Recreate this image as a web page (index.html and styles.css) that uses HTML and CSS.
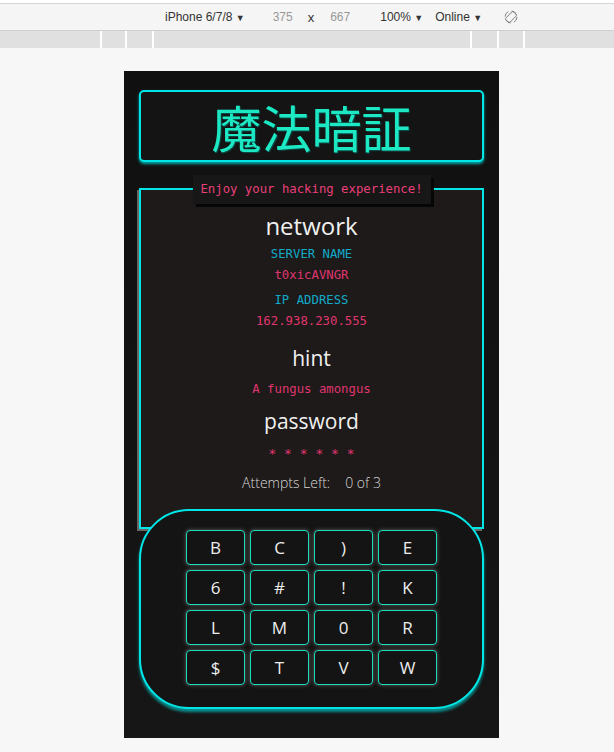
FILE: index.html
```html
<!DOCTYPE html>
<html>
<head>
  <title>魔法暗証</title>
  <link rel="stylesheet" href="styles.css">
</head>
<body>

<div class="devtools">
  <div class="toolbar">
    <span class="device">iPhone 6/7/8 <span class="arrow">&#9660;</span></span>
    <span class="dim">375</span>
    <span class="times">x</span>
    <span class="dim second">667</span>
    <span class="zoom">100% <span class="arrow">&#9660;</span></span>
    <span class="net">Online <span class="arrow">&#9660;</span></span>
    <svg class="rotate" width="14" height="14" viewBox="0 0 14 14">
      <circle cx="7" cy="7" r="6" fill="none" stroke="#777" stroke-width="0.9" stroke-dasharray="6 3.4"/>
      <rect x="4" y="1.5" width="6" height="11" rx="1.4" fill="none" stroke="#777" stroke-width="0.9" transform="rotate(45 7 7)"/>
    </svg>
  </div>
  <div class="ruler">
    <span style="width:100px"></span>
    <span style="width:23px"></span>
    <span style="width:25px"></span>
    <span style="width:316px"></span>
    <span style="width:25px"></span>
    <span style="width:24px"></span>
    <span style="width:89px"></span>
  </div>
</div>

<div class="stage">
  <div class="phone">
    <div class="title-box">
      <h1>魔法暗証</h1>
    </div>

    <div class="panel">
      <div class="tip">Enjoy your hacking experience!</div>

      <h2>network</h2>
      <p class="label">SERVER NAME</p>
      <p class="value">t0xicAVNGR</p>
      <p class="label next">IP ADDRESS</p>
      <p class="value">162.938.230.555</p>

      <h3 class="gap">hint</h3>
      <p class="value hint">A fungus amongus</p>

      <h3 class="pass">password</h3>
      <p class="value stars">* * * * * *</p>

      <p class="attempts">Attempts Left:<span class="count">0 of 3</span></p>
    </div>

    <div class="keypad">
      <div class="keys">
        <button>B</button>
        <button>C</button>
        <button>)</button>
        <button>E</button>
        <button>6</button>
        <button>#</button>
        <button>!</button>
        <button>K</button>
        <button>L</button>
        <button>M</button>
        <button>0</button>
        <button>R</button>
        <button>$</button>
        <button>T</button>
        <button>V</button>
        <button>W</button>
      </div>
    </div>
  </div>
</div>

</body>
</html>
```

FILE: styles.css
```css
body {
  margin: 0;
  background-color: #f7f7f7;
  font-family: "Open Sans", sans-serif;
}
.devtools {
  background-color: #fff;
  padding-top: 3px;
  font-family: "Liberation Sans", Arial, sans-serif;
  font-size: 12px;
  color: #333;
}
.toolbar {
  display: flex;
  align-items: center;
  height: 26px;
  padding-left: 165px;
  background-color: #f5f5f5;
  border-top: 1px solid #d6d6d6;
  border-bottom: 1px solid #cfcfcf;
}
.toolbar .arrow {
  font-size: 9px;
}
.toolbar .dim {
  color: #999;
  margin-left: 28px;
}
.toolbar .dim.second {
  margin-left: 16px;
}
.toolbar .times {
  margin-left: 15px;
  font-size: 13px;
}
.toolbar .zoom {
  margin-left: 30px;
}
.toolbar .net {
  margin-left: 12px;
}
.toolbar .rotate {
  margin-left: 22px;
}
.ruler {
  display: flex;
  gap: 2px;
  height: 17px;
  background-color: #fff;
}
.ruler span {
  background-color: #e0e0e0;
}

.stage {
  padding: 23px 0 0 124px;
}
.phone {
  width: 375px;
  height: 667px;
  box-sizing: border-box;
  padding: 19px 15px 0;
  background: linear-gradient(#101010, #161616);
}
.title-box {
  height: 72px;
  box-sizing: border-box;
  border: 2px solid #00e6e6;
  border-radius: 5px;
  background-color: #141414;
  box-shadow: 0 2px 3px rgba(0, 230, 230, 0.7);
  text-align: center;
}
.title-box h1 {
  margin: 0;
  font-family: "Noto Sans CJK JP", sans-serif;
  font-size: 50px;
  font-weight: 400;
  line-height: 68px;
  color: #1de8c4;
  text-shadow: 1px 1px 1px #0a4f4a;
}

.panel {
  position: relative;
  margin-top: 26px;
  padding: 20px 0 34px;
  border: 2px solid #00e6e6;
  background-color: #1d1a19;
  box-shadow: -2px 2px 0 #666;
  text-align: center;
}
.tip {
  position: absolute;
  top: -15px;
  left: 50%;
  transform: translateX(-50%);
  padding: 0 8px;
  line-height: 29px;
  white-space: nowrap;
  background-color: #171717;
  box-shadow: 3px 3px 0 #060606;
  font-family: "DejaVu Sans Mono", monospace;
  font-size: 12.3px;
  color: #ea3f79;
}
.panel h2, .panel h3 {
  margin: 0;
  font-size: 24px;
  font-weight: 400;
  line-height: 32px;
  color: #f0f0f0;
}
.panel h3 {
  font-size: 21px;
}
.panel h3.gap {
  margin-top: 13px;
}
.panel h3.pass {
  margin-top: 8px;
}
.label, .value {
  margin: 0;
  font-family: "DejaVu Sans Mono", monospace;
  font-size: 12.3px;
  line-height: 16px;
}
.label {
  margin-top: 4px;
  color: #12aac8;
}
.label.next {
  margin-top: 9px;
}
.value {
  margin-top: 5px;
  color: #e0356f;
}
.value.hint {
  margin-top: 7px;
}
.value.stars {
  margin-top: 9px;
  font-size: 13px;
}
.attempts {
  margin: 11px 0 0;
  font-size: 14px;
  font-weight: 300;
  line-height: 20px;
  color: #d8d8d8;
}
.attempts .count {
  margin-left: 15px;
}

.keypad {
  position: relative;
  margin-top: -20px;
  padding: 19px 0 22px;
  border: 2px solid #00e6e6;
  border-radius: 50px;
  background-color: #141414;
  box-shadow: 0 3px 3px rgba(0, 230, 230, 0.6);
}
.keys {
  display: grid;
  grid-template-columns: repeat(4, 59px);
  grid-auto-rows: 35px;
  gap: 5px;
  justify-content: center;
}
.keys button {
  padding: 0;
  border: 1.5px solid #1adfb8;
  border-radius: 4px;
  background-color: #141414;
  box-shadow: 0 0 4px rgba(170, 170, 170, 0.5);
  font-family: "Open Sans", sans-serif;
  font-size: 17px;
  color: #eeeeee;
  cursor: pointer;
}
```
